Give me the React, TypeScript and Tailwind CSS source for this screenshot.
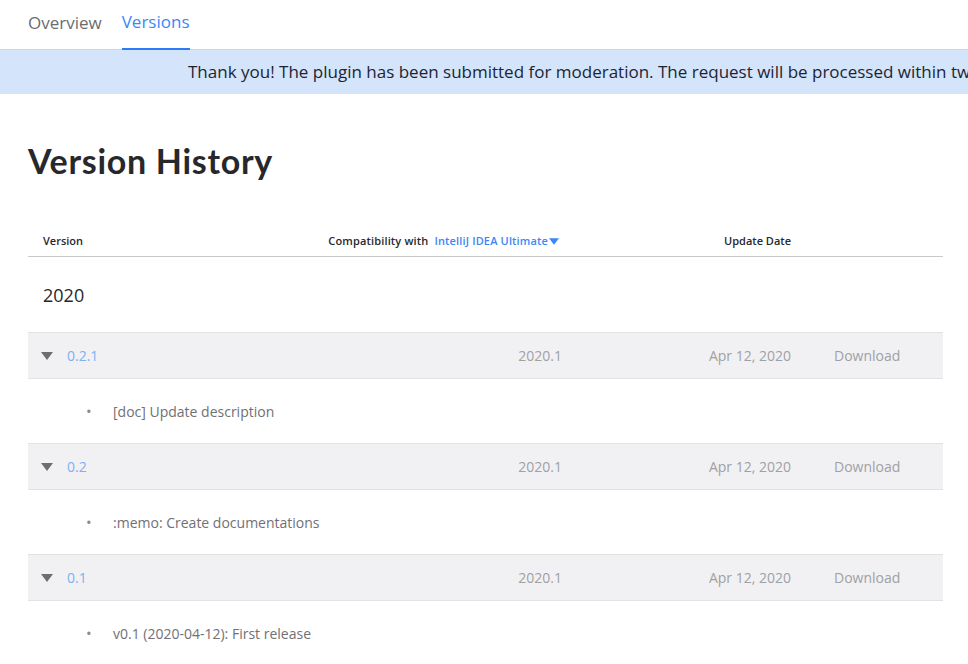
import { FC } from 'react';

type Version = { version: string; compat: string; date: string; notes: string[] };

const versions: Version[] = [
  { version: '0.2.1', compat: '2020.1', date: 'Apr 12, 2020', notes: ['[doc] Update description'] },
  { version: '0.2', compat: '2020.1', date: 'Apr 12, 2020', notes: [':memo: Create documentations'] },
  { version: '0.1', compat: '2020.1', date: 'Apr 12, 2020', notes: ['v0.1 (2020-04-12): First release'] },
];

const cols = 'grid grid-cols-[298px_236px_229px_1fr] items-center';

const Caret: FC<{ className?: string }> = ({ className }) => (
  <svg width="12" height="8" viewBox="0 0 12 8" className={className}>
    <path d="M0 0 L12 0 L6 8 Z" fill="currentColor" />
  </svg>
);

const VersionRow: FC<{ v: Version }> = ({ v }) => (
  <div>
    <div className={`${cols} h-[47px] bg-[#f1f1f3] border-y border-[#e2e2e4] text-[14px] text-[#a0a0a5]`}>
      <div className="flex items-center pl-[13px]">
        <Caret className="text-[#6e6e72] mr-[14px]" />
        <span className="text-[#7db0f5]">{v.version}</span>
      </div>
      <div className="text-right">{v.compat}</div>
      <div className="text-right">{v.date}</div>
      <div className="pl-[43px]">Download</div>
    </div>
    <ul className="h-[64px] flex flex-col justify-center pl-[58px]">
      {v.notes.map((n) => (
        <li key={n} className="flex items-center text-[14px] text-[#707075]">
          <span className="w-[27px] text-[#8a8a8e] text-[15px] leading-none">•</span>
          {n}
        </li>
      ))}
    </ul>
  </div>
);

const App: FC = () => {
  return (
    <div className="w-[968px] h-[664px] overflow-hidden bg-white font-['Open_Sans','Segoe_UI',sans-serif]">
      <div className="flex h-[50px] border-b border-[#d4d4d6] pl-[28px] gap-[20px] text-[17px]">
        <div className="flex items-center pb-[4px] text-[#6c6c70]">Overview</div>
        <div className="flex items-center pb-[4px] text-[#3c87f7] border-b-2 border-[#2b7cf6] mb-[-1px]">Versions</div>
      </div>
      <div className="h-[44px] bg-[#d3e4fb] flex items-center pl-[188px] whitespace-nowrap overflow-hidden text-[17px] text-[#1c2434]">
        Thank you! The plugin has been submitted for moderation. The request will be processed within two business days.
      </div>

      <div className="pl-[28px] pr-[25px]">
        <h1 className="mt-[47px] text-[34px] leading-[40px] font-bold text-[#27282c] font-['Lato','Open_Sans',sans-serif] tracking-[0.7px]">
          Version History
        </h1>

        <div className={`${cols} mt-[46px] h-[30px] border-b border-[#c9c9cb] text-[11px] text-[#27282c] font-semibold`}>
          <div className="pl-[15px]">Version</div>
          <div className="flex items-center justify-end pr-[3px] tracking-[0.15px]">
            Compatibility with
            <span className="ml-[6px] text-[#3c87f7]">IntelliJ IDEA Ultimate</span>
            <Caret className="text-[#3c87f7] ml-[1px] w-[10px] h-[7px]" />
          </div>
          <div className="text-right">Update Date</div>
          <div />
        </div>

        <div className="h-[75px] flex items-center pl-[15px] pt-[2px] text-[18px] text-[#27282c] font-medium">2020</div>

        {versions.map((v) => (
          <VersionRow key={v.version} v={v} />
        ))}
      </div>
    </div>
  );
};

export default App;
